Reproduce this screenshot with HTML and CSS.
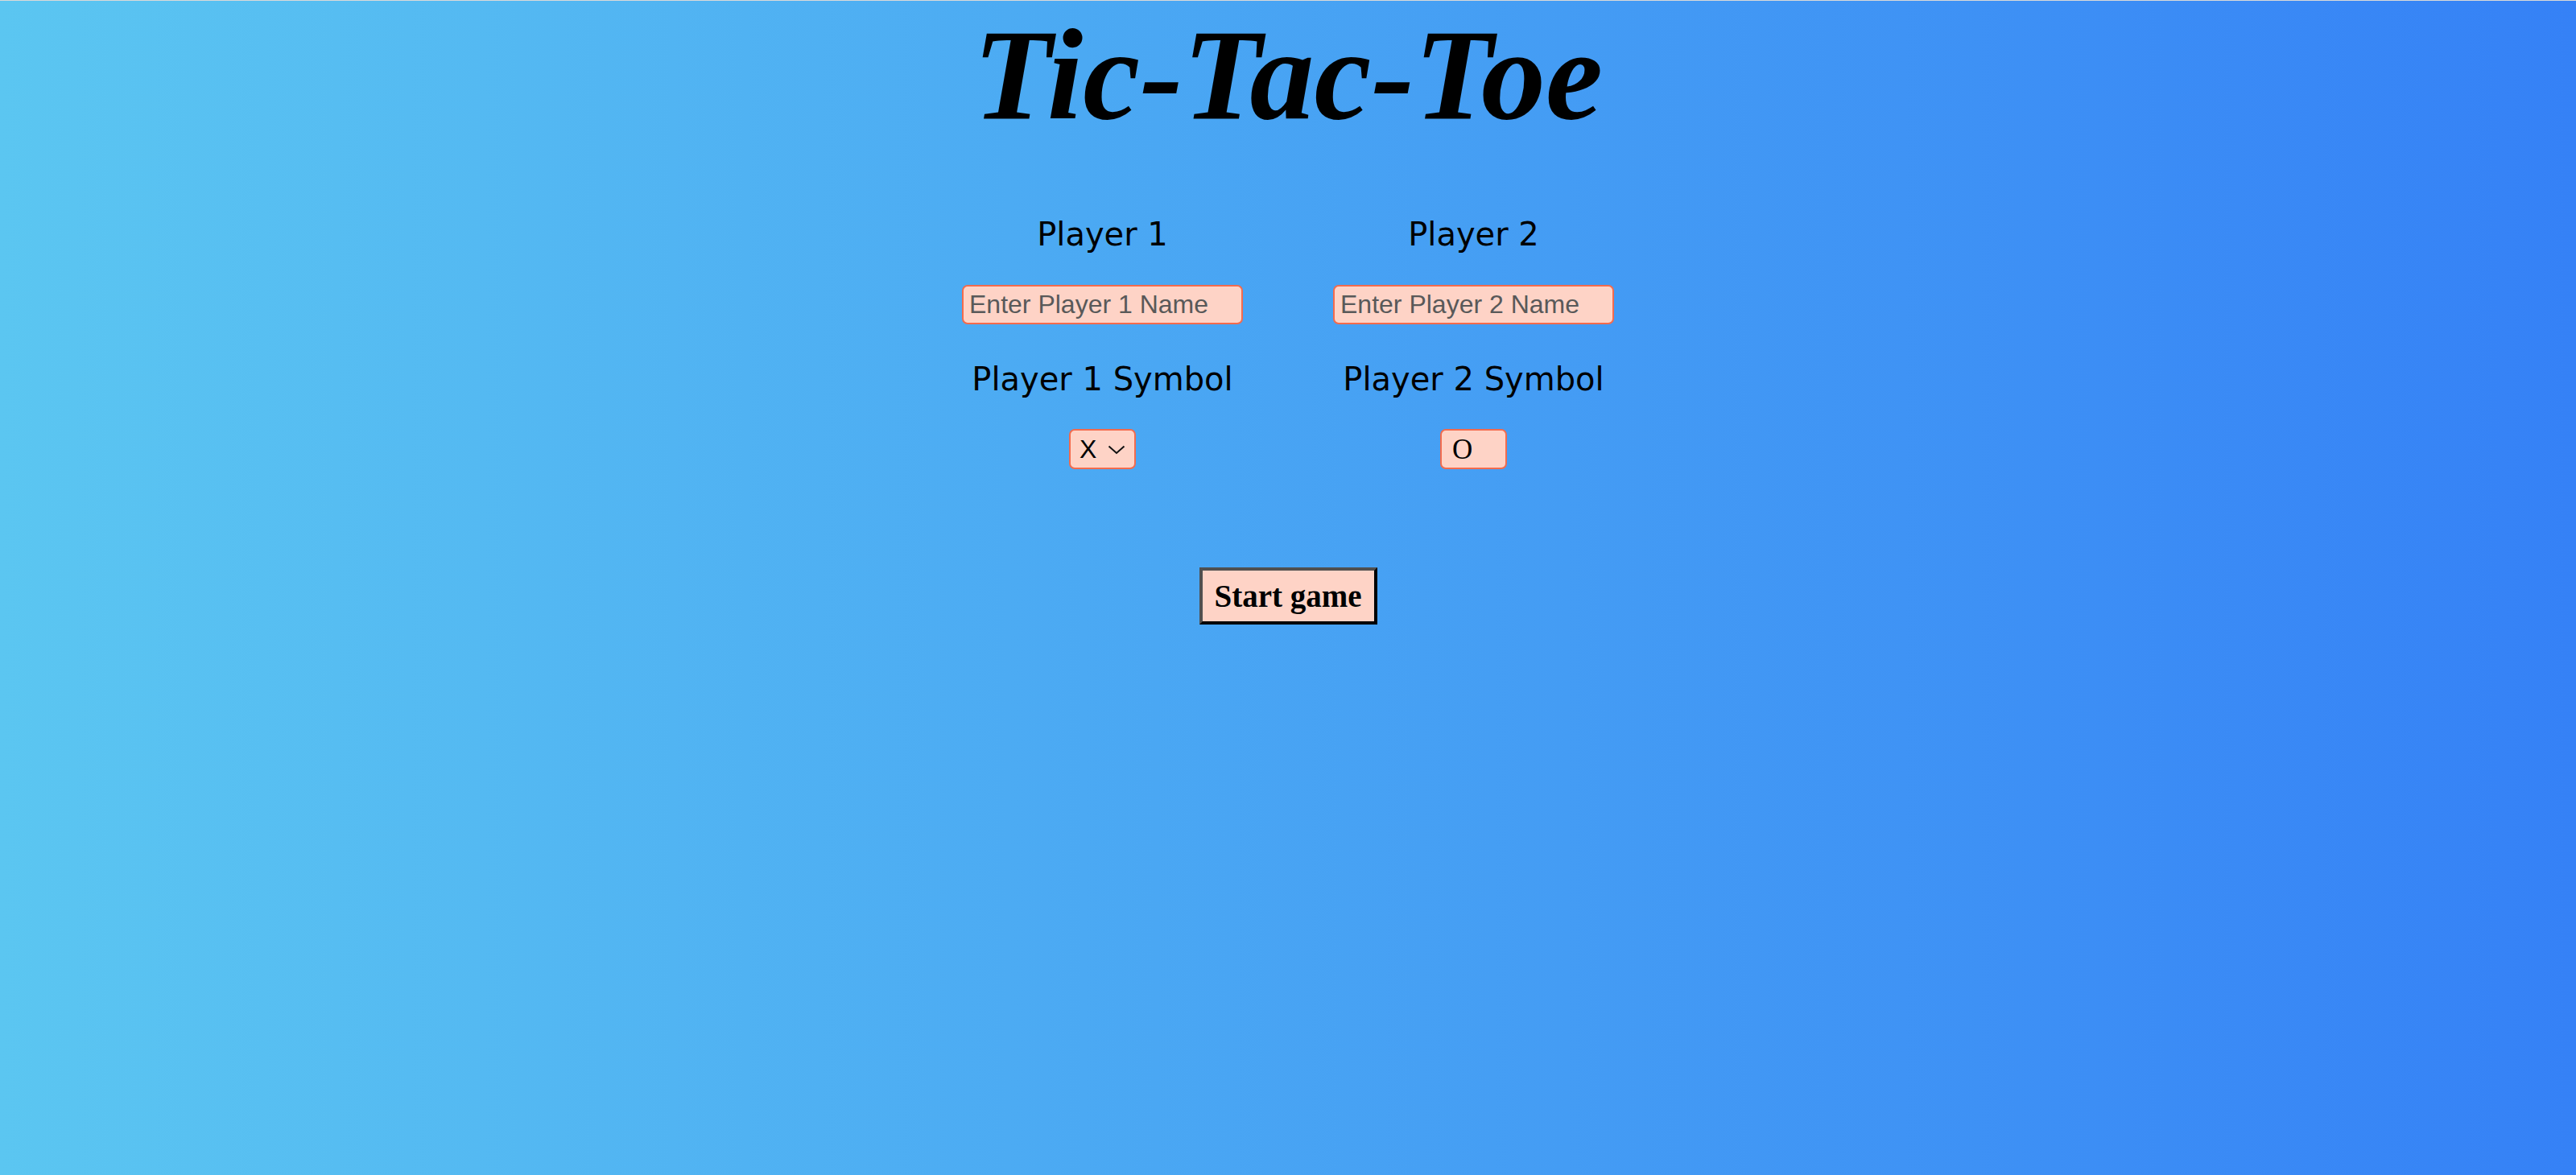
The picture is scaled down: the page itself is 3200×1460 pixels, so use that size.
FILE: index.html
```html
<!DOCTYPE html>
<html lang="en">
<head>
<meta charset="utf-8">
<title>Tic-Tac-Toe</title>
<link rel="stylesheet" href="styles.css">
</head>
<body>
<main class="page">
  <h1 class="title">Tic-Tac-Toe</h1>
  <section class="players">
    <div class="player">
      <label class="label" for="p1">Player 1</label>
      <input class="name-input" id="p1" type="text" placeholder="Enter Player 1 Name">
      <div class="label label-symbol">Player 1 Symbol</div>
      <div class="symbol symbol-select">
        <span class="symbol-x">X</span>
        <svg class="chevron" width="22" height="12" viewBox="0 0 22 12"><path d="M1.5 1.5 L11 10 L20.5 1.5" fill="none" stroke="#111" stroke-width="2"/></svg>
      </div>
    </div>
    <div class="player">
      <label class="label" for="p2">Player 2</label>
      <input class="name-input" id="p2" type="text" placeholder="Enter Player 2 Name">
      <div class="label label-symbol">Player 2 Symbol</div>
      <div class="symbol symbol-fixed"><span class="symbol-o">O</span></div>
    </div>
  </section>
  <button class="start" type="button">Start game</button>
</main>
</body>
</html>
```
FILE: styles.css
```css
html {
  margin: 0;
  padding: 0;
  height: 100%;
}
body {
  margin: 0;
  min-height: 100%;
  border-top: 1px solid #d9d9d9;
  box-sizing: border-box;
  background: linear-gradient(to right, #5bc6f1 0%, #3581f6 100%);
  font-family: "DejaVu Sans", Verdana, sans-serif;
  color: #000;
}
.page {
  display: flex;
  flex-direction: column;
  align-items: center;
}
.title {
  margin: 12px 0 0 0;
  font-family: "Liberation Serif", "Times New Roman", serif;
  font-style: italic;
  font-weight: bold;
  font-size: 160px;
  line-height: 160px;
}
.players {
  display: grid;
  grid-template-columns: 350px 350px;
  column-gap: 111px;
  margin-top: 95px;
}
.player {
  display: flex;
  flex-direction: column;
  align-items: center;
}
.label {
  font-size: 40px;
  line-height: 46px;
  white-space: nowrap;
}
.name-input {
  margin-top: 40px;
  width: 349px;
  height: 49px;
  box-sizing: border-box;
  border: 2px solid #f36b4d;
  border-radius: 7px;
  background: #fed3c6;
  padding: 0 0 0 7px;
  font-family: "Liberation Sans", Arial, sans-serif;
  font-size: 32px;
  color: #000;
  outline: none;
}
.name-input::placeholder {
  color: #595959;
}
.label-symbol {
  margin-top: 45px;
}
.symbol {
  margin-top: 39px;
  width: 83px;
  height: 50px;
  box-sizing: border-box;
  border: 2px solid #f36b4d;
  border-radius: 7px;
  background: #fed3c6;
  display: flex;
  align-items: center;
}
.symbol-select {
  padding-left: 11px;
}
.symbol-x {
  font-family: "Liberation Sans", Arial, sans-serif;
  font-size: 32px;
  line-height: 1;
}
.chevron {
  margin-left: 14px;
  margin-top: 2px;
}
.symbol-fixed {
  padding-left: 13px;
}
.symbol-o {
  font-family: "Liberation Serif", "Times New Roman", serif;
  font-size: 35px;
  line-height: 1;
}
.start {
  margin-top: 122px;
  width: 221px;
  height: 71px;
  box-sizing: border-box;
  border-width: 4px;
  border-style: solid;
  border-color: #505050 #000 #000 #505050;
  background: #fed3c6;
  font-family: "Liberation Serif", "Times New Roman", serif;
  font-weight: bold;
  font-size: 39px;
  color: #000;
  padding: 0;
  cursor: pointer;
}
```
